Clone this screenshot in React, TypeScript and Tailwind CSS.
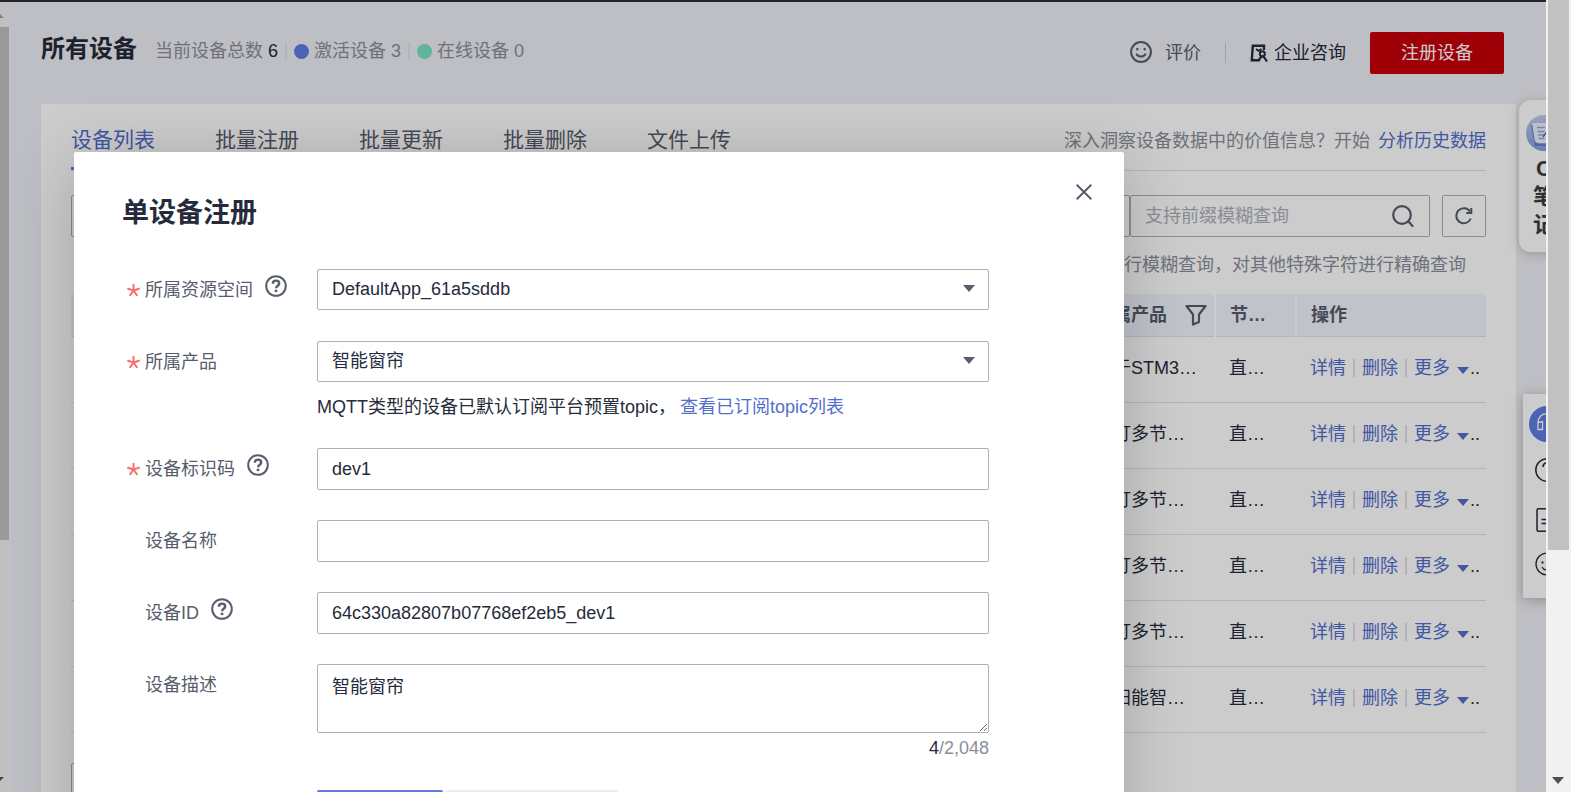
import React from 'react';

const FONT = "font-['Liberation_Sans','Noto_Sans_CJK_SC',sans-serif]";

interface Device {
  product: string;
  node: string;
}

const devices: Device[] = [
  { product: '基于STM3…', node: '直…' },
  { product: '路灯多节…', node: '直…' },
  { product: '路灯多节…', node: '直…' },
  { product: '路灯多节…', node: '直…' },
  { product: '路灯多节…', node: '直…' },
  { product: '太阳能智…', node: '直…' },
];

const tabs = ['设备列表', '批量注册', '批量更新', '批量删除', '文件上传'];

const SmileIcon = ({ className }: { className?: string }) => (
  <svg viewBox="0 0 24 24" fill="none" stroke="currentColor" strokeWidth="2.2" strokeLinecap="round" className={className}>
    <circle cx="12" cy="12" r="10.8" />
    <path d="M7.200 14.5c1 1.800 2.800 2.500 4.800 2.500s3.800-.7 4.800-2.500" />
    <path d="M8 8.700v.3M16 8.700v.3" strokeWidth="2.600" />
  </svg>
);

const HelpIcon = ({ className }: { className?: string }) => (
  <svg viewBox="0 0 22 22" fill="none" stroke="currentColor" strokeWidth="2" className={className}>
    <circle cx="11" cy="11" r="9.8" />
    <path d="M7.8 8.8c0-2 1.3-3.2 3.2-3.2s3.2 1.200 3.200 2.900c0 2.200-3.100 2.400-3.100 4.700" strokeWidth="2.400" />
    <path d="M11 14.700v2.400" strokeWidth="2.600" />
  </svg>
);

const ConsultIcon = () => (
  <svg viewBox="0 0 18 18" fill="none" stroke="currentColor" strokeWidth="2.4" className="h-[18px] w-[18px]">
    <path d="M8 16.200H1.800L2.800 1.800h11.200V6" />
    <path d="M6 5l2.500 1.800L11.500 5" strokeWidth="1.800" />
    <circle cx="12.300" cy="9.800" r="2.500" strokeWidth="2" />
    <path d="M8.800 17.500c.2-2.700 1.400-4.300 3.500-5M13.500 12.300L17 17.500" strokeWidth="2.200" />
  </svg>
);

const Caret = ({ className }: { className?: string }) => (
  <svg viewBox="0 0 12 7" fill="currentColor" className={`h-[7px] w-3 ${className ?? ''}`}>
    <path d="M0 0h12L6 7z" />
  </svg>
);

const Divider = () => <span className="mx-[7px] h-[18px] w-[2px] bg-[#e1e2e8]" />;

const PageHeader = () => (
  <header className="flex h-[102px] items-start justify-between pr-3 text-lg text-[#8a8e99]">
    <div className="flex h-[98px] items-center">
      <h1 className="mr-[18px] pb-1 text-2xl font-bold text-[#252b3a]">所有设备</h1>
      <span>当前设备总数</span>
      <span className="ml-[5px] text-[#252b3a]">6</span>
      <Divider />
      <span className="mr-[5px] h-[15px] w-[15px] rounded-full bg-[#5e7ce0]" />
      <span>激活设备 3</span>
      <Divider />
      <span className="mr-[5px] h-[15px] w-[15px] rounded-full bg-[#7be0c2]" />
      <span>在线设备 0</span>
    </div>
    <div className="flex h-[102px] items-center text-[#575d6c]">
      <SmileIcon className="mb-[2px] h-[22px] w-[22px]" />
      <a href="#rate" className="ml-[13px]">评价</a>
      <span className="mx-6 h-5 w-px bg-[#c8c9d0]" />
      <a href="#consult" className="flex items-center gap-[6px] text-[#252b3a]">
        <ConsultIcon />
        企业咨询
      </a>
      <button className="ml-6 h-[42px] w-[134px] rounded-[2px] bg-[#c7000b] text-white">注册设备</button>
    </div>
  </header>
);

const TabBar = () => (
  <div className="flex h-[67px] items-stretch justify-between border-b border-[#dfe1e6]">
    <nav className="flex gap-[60px] text-[21px] text-[#575d6c]">
      {tabs.map((tab, i) => (
        <a
          key={tab}
          href={`#tab-${i}`}
          className={i === 0 ? 'flex items-center border-b-[3px] border-[#5e7ce0] pt-2 text-[#526ecc]' : 'flex items-center border-b-[3px] border-transparent pt-2'}
        >
          {tab}
        </a>
      ))}
    </nav>
    <p className="flex items-center pt-2 text-lg text-[#8a8e99]">
      深入洞察设备数据中的价值信息？开始
      <a href="#history" className="ml-2 text-[#526ecc]">分析历史数据</a>
    </p>
  </div>
);

const SearchRow = () => (
  <div className="mt-6 flex h-[42px]">
    <select aria-label="状态" className="flex-1 appearance-none rounded-[2px] border border-[#adb0b8]" />
    <div className="relative w-[300px]">
      <input
        aria-label="查询"
        placeholder="支持前缀模糊查询"
        className="h-full w-full rounded-[2px] border border-[#adb0b8] px-[14px] text-lg placeholder:text-[#adb0b8]"
      />
      <svg viewBox="0 0 22 22" fill="none" stroke="#575d6c" strokeWidth="2.200" strokeLinecap="round" className="absolute top-[10px] right-4 h-[22px] w-[22px]">
        <circle cx="10" cy="10" r="8.800" />
        <path d="M16.500 16.500L20.500 21" />
      </svg>
    </div>
    <button aria-label="刷新" className="ml-3 flex w-11 items-center justify-center rounded-[2px] border border-[#adb0b8]">
      <svg viewBox="0 0 18 18" fill="none" stroke="#575d6c" strokeWidth="2" className="h-[18px] w-[18px]">
        <path d="M15.800 11.500A7.500 7.500 0 1 1 15 4.500" />
        <path d="M16.300 1v5h-5" />
      </svg>
    </button>
  </div>
);

const DeviceTable = () => (
  <table className="w-full table-fixed text-left text-lg">
    <colgroup>
      <col />
      <col className="w-[135px]" />
      <col className="w-[81px]" />
      <col className="w-[190px]" />
    </colgroup>
    <thead>
      <tr className="h-[42px] border-b border-[#dfe1e6] bg-[#f2f4fd] text-[#575d6c]">
        <th />
        <th className="border-r-2 border-white pl-[15px]">
          <span className="flex items-center justify-between pr-[7px] whitespace-nowrap">
            所属产品
            <svg viewBox="0 0 22 22" fill="none" stroke="currentColor" strokeWidth="2.200" strokeLinejoin="round" className="h-[22px] w-[22px] shrink-0">
              <path d="M1.500 2h19l-6.500 8.500v7.500l-6 2.500v-10z" />
            </svg>
          </span>
        </th>
        <th className="border-r-2 border-white pl-[14px]">节…</th>
        <th className="pl-[14px]">操作</th>
      </tr>
    </thead>
    <tbody>
      {devices.map((device, i) => (
        <tr key={i} className="h-[66px] border-b border-[#dfe1e6] text-[#252b3a]">
          <td />
          <td className="pb-[2px] pl-[15px] whitespace-nowrap">{device.product}</td>
          <td className="pb-[2px] pl-[14px] whitespace-nowrap">{device.node}</td>
          <td className="pb-[2px] pl-[14px] whitespace-nowrap">
            <div className="flex items-center text-[#526ecc]">
              <a href="#detail">详情</a>
              <Divider />
              <a href="#delete">删除</a>
              <Divider />
              <a href="#more" className="flex items-center gap-[7px]">
                更多
                <Caret className="mt-1" />
              </a>
              <span className="ml-px text-[#252b3a]">..</span>
            </div>
          </td>
        </tr>
      ))}
    </tbody>
  </table>
);

const SideWidgets = () => (
  <>
    <aside className="absolute top-[98px] left-full -ml-[27px] flex h-[152px] w-[50px] flex-col items-center rounded-xl bg-white pt-[15px] text-[22px] leading-7 font-bold text-[#3d3d3d] shadow-[0_2px_12px_rgba(0,0,0,0.2)]">
      <svg viewBox="0 0 36 36" className="h-9 w-9 shrink-0">
        <defs>
          <linearGradient id="note" x1="0" y1="0" x2="0" y2="1">
            <stop offset="0" stopColor="#c3cdec" />
            <stop offset="1" stopColor="#7f9ee0" />
          </linearGradient>
        </defs>
        <circle cx="18" cy="18" r="18" fill="url(#note)" />
        <path d="M5 10h4l3 19h16v2H9z" fill="#6380c8" />
        <path d="M6 8h24v20H12.500c-2.500 0-3.500-1-4-4z" fill="#eef1fb" />
        <path d="M11 12.500h8M11.500 16.500h7M12 20h6M12.500 23.500h6" stroke="#8fa6dc" strokeWidth="1.300" />
        <path d="M17 22l5-7" stroke="#5a4fe0" strokeWidth="1.300" />
      </svg>
      <span className="mt-1">C</span>
      <span>笔</span>
      <span>记</span>
    </aside>
    <aside className="absolute top-[392px] left-full -ml-[23px] flex h-[204px] w-12 flex-col items-center bg-white pt-3 text-[#252b3a] shadow-[0_2px_12px_rgba(0,0,0,0.25)]">
      <span className="flex h-9 w-9 shrink-0 items-center justify-center rounded-full bg-[#5e7ce0]">
        <svg viewBox="0 0 20 24" fill="none" stroke="#fff" strokeWidth="1.300" className="h-6 w-5">
          <path d="M1 11C1 5.500 4.500 1.500 10 1.500S19 5.500 19 11" />
          <path d="M1 10.500l4.500-1v8H1zM14.500 9.500l4.500 1v7h-4.500z" />
          <path d="M9 21.500h3" strokeWidth="2.500" />
        </svg>
      </span>
      <svg viewBox="0 0 24 24" fill="none" stroke="currentColor" strokeWidth="1.500" className="mt-4 h-6 w-6 shrink-0">
        <circle cx="12" cy="12" r="11.200" />
        <path d="M8 9c0-2.500 1.700-4 4-4s4 1.500 4 3.500c0 3-4 3-4 6M12 16.500v2" />
      </svg>
      <svg viewBox="0 0 24 24" fill="none" stroke="currentColor" strokeWidth="1.500" className="mt-[26px] h-6 w-6 shrink-0">
        <rect x="2" y=".8" width="20" height="22.400" rx="1.500" />
        <path d="M6.500 11.500H17M6.500 15.500H17" />
      </svg>
      <svg viewBox="0 0 24 24" fill="none" stroke="currentColor" strokeWidth="1.300" className="mt-5 h-6 w-6 shrink-0">
        <circle cx="12" cy="12" r="11" />
        <path d="M7 15c1 2 3 3 5 3s4-1 5-3" />
        <path d="M7.500 9.500v2M16.500 9.500v2" strokeWidth="2" />
      </svg>
    </aside>
  </>
);

interface FieldProps {
  id: string;
  label: string;
  required?: boolean;
  help?: boolean;
  children: React.ReactNode;
}

const Field: React.FC<FieldProps> = ({ id, label, required, help, children }) => (
  <div className="flex items-start">
    <div className="flex h-[42px] w-[195px] shrink-0 items-center text-[#575d6c]">
      <span className="w-[23px] pl-[5px] text-[#f66f6a]">
        {required && (
          <svg viewBox="0 0 12 12" stroke="currentColor" strokeWidth="1.800" className="h-[13px] w-[13px]">
            <path d="M6 6V0M6 6L.3 4.200M6 6l5.700-1.800M6 6l-3.500 5M6 6l3.500 5" />
          </svg>
        )}
      </span>
      <label htmlFor={id}>{label}</label>
      {help && <HelpIcon className="mb-2 ml-3 h-[22px] w-[22px]" />}
    </div>
    <div className="flex-1">{children}</div>
  </div>
);

const SelectBox = ({ id, value }: { id: string; value: string }) => (
  <div className="relative pb-px">
    <select id={id} className="block h-[41px] w-full appearance-none rounded-[2px] border border-[#adb0b8] bg-white px-[14px] pb-px">
      <option>{value}</option>
    </select>
    <Caret className="pointer-events-none absolute top-4 right-[14px] text-[#575d6c]" />
  </div>
);

const TextBox = ({ id, value }: { id: string; value: string }) => (
  <input id={id} defaultValue={value} className="block h-[42px] w-full rounded-[2px] border border-[#adb0b8] px-[14px]" />
);

const RegisterDialog = () => (
  <section
    role="dialog"
    aria-labelledby="dialog-title"
    className="h-[760px] w-[1050px] rounded-[2px] bg-white pt-10 pr-[135px] pl-12 text-lg text-[#252b3a] shadow-[0_8px_64px_rgba(0,0,0,0.2)]"
  >
    <div className="relative mb-[35px]">
      <h2 id="dialog-title" className="text-[27px] leading-[42px] font-bold">单设备注册</h2>
      <button aria-label="关闭" className="absolute -top-2 -right-[103px] text-[#575d6c]">
        <svg viewBox="0 0 16 16" fill="none" stroke="currentColor" strokeWidth="2" className="h-4 w-4">
          <path d="M.7.700l14.600 14.600M15.300.700L.7 15.300" />
        </svg>
      </button>
    </div>
    <form className="flex flex-col gap-[30px]">
      <Field id="space" label="所属资源空间" required help>
        <SelectBox id="space" value="DefaultApp_61a5sddb" />
      </Field>
      <Field id="product" label="所属产品" required>
        <SelectBox id="product" value="智能窗帘" />
        <p className="mt-3 -mb-px leading-6">
          MQTT类型的设备已默认订阅平台预置topic，
          <a href="#topics" className="ml-1 text-[#526ecc]">查看已订阅topic列表</a>
        </p>
      </Field>
      <Field id="code" label="设备标识码" required help>
        <TextBox id="code" value="dev1" />
      </Field>
      <Field id="name" label="设备名称">
        <TextBox id="name" value="" />
      </Field>
      <Field id="device-id" label="设备ID" help>
        <TextBox id="device-id" value="64c330a82807b07768ef2eb5_dev1" />
      </Field>
      <Field id="desc" label="设备描述">
        <textarea id="desc" defaultValue="智能窗帘" className="block h-[69px] w-full rounded-[2px] border border-[#adb0b8] px-[14px] py-[10px] leading-6" />
        <p className="mt-[3px] text-right leading-6 text-[#8a8e99]">
          <span className="text-[#252b3a]">4</span>/2,048
        </p>
      </Field>
      <div className="flex gap-[3px] pl-[195px]">
        <button type="submit" aria-label="确定" className="h-[42px] w-[126px] rounded-[2px] bg-[#5e7ce0]" />
        <button type="button" aria-label="取消" className="h-[42px] w-[173px] rounded-[2px] bg-[#e9edfa]" />
      </div>
    </form>
  </section>
);

export default function App() {
  return (
    <div className={`flex h-screen overflow-hidden ${FONT}`}>
      <div className="relative flex min-w-0 flex-1 overflow-hidden border-t-2 border-[#23232b] bg-[#eeeff5]">
        {/* scrollbar of the inner frame */}
        <div className="flex w-[11px] shrink-0 flex-col justify-between bg-[#f1f1f1] text-[#505050]">
          <svg viewBox="0 0 4 4" fill="#a3a3a3" className="mt-3 h-1 w-1">
            <path d="M0 0l4 4H0z" />
          </svg>
          <div className="mt-[9px] mb-auto h-[513px] w-[9px] bg-[#c1c1c1]" />
          <svg viewBox="0 0 4 4" fill="currentColor" className="mb-[11px] h-1 w-1">
            <path d="M0 0h4L0 4z" />
          </svg>
        </div>
        <main className="min-w-0 flex-1 pr-[30px] pl-[30px]">
          <PageHeader />
          <div className="h-[760px] bg-white px-[30px]">
            <TabBar />
            <SearchRow />
            <p className="my-[14px] pr-5 text-right text-lg leading-[29px] text-[#8a8e99]">行模糊查询，对其他特殊字符进行精确查询</p>
            <DeviceTable />
            <select aria-label="每页条数" className="mt-[30px] h-[42px] w-20 appearance-none rounded-[2px] border border-[#adb0b8]" />
          </div>
        </main>
        <SideWidgets />
        <div className="absolute inset-0 bg-black/20 pt-[150px] pl-[74px]">
          <RegisterDialog />
        </div>
      </div>
      {/* window scrollbar */}
      <div className="flex w-[25px] shrink-0 flex-col justify-between bg-[#f1f1f1] pl-[2px]">
        <div className="h-[550px] w-[21px] bg-[#c1c1c1]" />
        <Caret className="mb-2 ml-1 text-[#505050]" />
      </div>
    </div>
  );
}
